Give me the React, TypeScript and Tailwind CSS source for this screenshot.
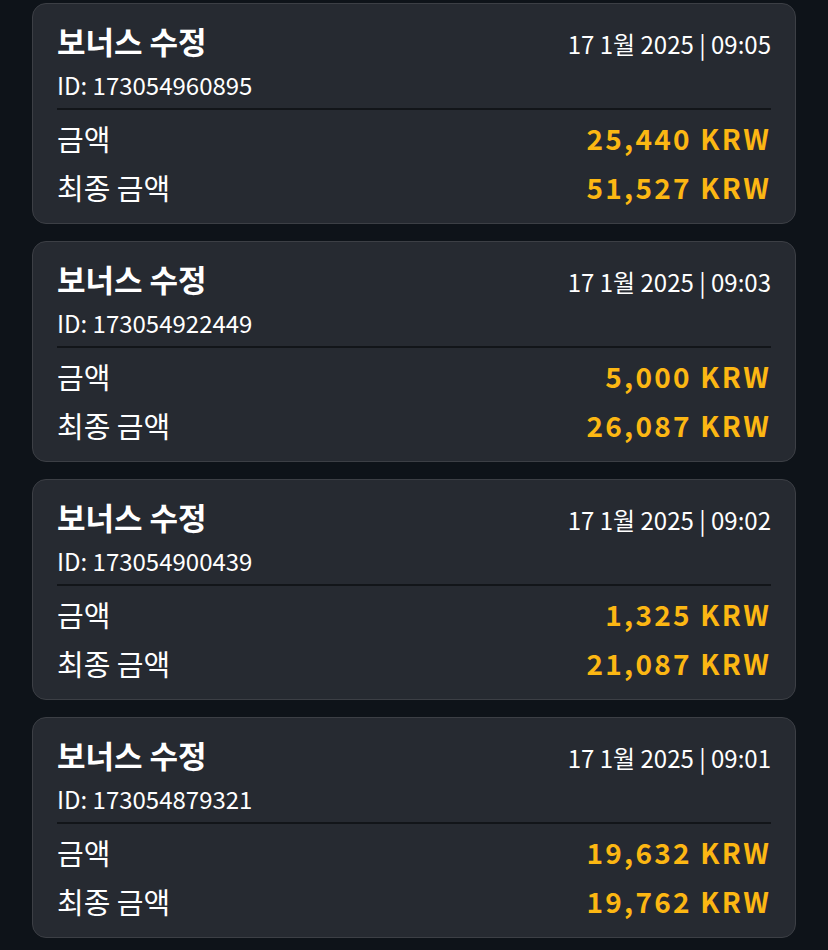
const FONT = { fontFamily: '"Noto Sans CJK KR", "Noto Sans", sans-serif' };

const ITEMS = [
  { id: "173054960895", time: "09:05", amount: "25,440", total: "51,527" },
  { id: "173054922449", time: "09:03", amount: "5,000", total: "26,087" },
  { id: "173054900439", time: "09:02", amount: "1,325", total: "21,087" },
  { id: "173054879321", time: "09:01", amount: "19,632", total: "19,762" },
];

type Item = (typeof ITEMS)[number];

const BonusCard = ({ item }: { item: Item }) => (
  <div className="rounded-[14px] border-[1.5px] border-[#3c3f45] bg-[#262a31] px-[24px] pt-[19px] pb-[12px]">
    {/* 헤더: 제목 + 날짜 */}
    <div className="flex h-[36px] items-baseline justify-between">
      <span className="text-[31px] leading-[36px] font-bold text-white">보너스 수정</span>
      <span className="text-[24px] leading-[36px] text-white">17 1월 2025 | {item.time}</span>
    </div>
    <div className="mt-[11px] h-[30px] text-[24px] leading-[30px] text-white">ID: {item.id}</div>
    <div className="mt-[8px] h-[2px] bg-[#121519]" />
    <div className="mt-[4px] flex items-center justify-between h-[48px]">
      <span className="text-[29px] leading-[40px] text-white">금액</span>
      <span className="text-[28px] leading-[40px] font-bold tracking-[0.08em] text-[#fcb713]">{item.amount} KRW</span>
    </div>
    <div className="mt-[1px] flex items-center justify-between h-[48px]">
      <span className="text-[29px] leading-[40px] text-white">최종 금액</span>
      <span className="text-[28px] leading-[40px] font-bold tracking-[0.08em] text-[#fcb713]">{item.total} KRW</span>
    </div>
  </div>
);

export default function App() {
  return (
    <div className="min-h-[950px] w-[828px] bg-[#0e1319] pt-[3px] px-[32px] flex flex-col gap-[17px]" style={FONT}>
      {ITEMS.map((item) => (
        <BonusCard key={item.id} item={item} />
      ))}
    </div>
  );
}
